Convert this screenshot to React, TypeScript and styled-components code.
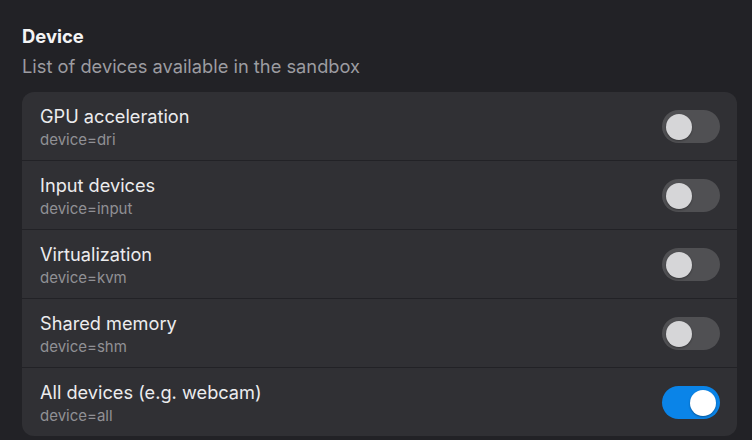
import React, { useState } from "react";
import styled, { createGlobalStyle } from "styled-components";

const Global = createGlobalStyle`
  html, body { margin: 0; padding: 0; background: #222226; }
  body { font-family: Inter, "Noto Sans", sans-serif; -webkit-font-smoothing: antialiased; }
`;

const Page = styled.div`
  width: 752px;
  height: 440px;
  box-sizing: border-box;
  padding: 25px 15px 0 22px;
  background: #222226;
  overflow: hidden;
`;

const Title = styled.h2`
  margin: 0;
  font-size: 18.4px;
  font-weight: 700;
  line-height: 23px;
  color: #f4f4f5;
`;

const Subtitle = styled.p`
  margin: 7px 0 0;
  font-size: 18.3px;
  line-height: 23px;
  color: #9c9ca1;
`;

const Card = styled.div`
  margin-top: 14px;
  background: #303034;
  border-radius: 12px;
  overflow: hidden;
  display: flex;
  flex-direction: column;
`;

const Row = styled.div`
  height: 68px;
  display: flex;
  align-items: center;
  justify-content: space-between;
  padding: 0 17px 0 18px;
  & + & { border-top: 1px solid #222226; }
`;

const Texts = styled.div`
  display: flex;
  flex-direction: column;
  gap: 3px;
  padding-top: 2px;
`;

const RowTitle = styled.div`
  font-size: 18.2px;
  line-height: 22px;
  color: #ececee;
`;

const RowSub = styled.div`
  font-size: 15px;
  line-height: 19px;
  color: #909095;
`;

const Track = styled.button<{ $on: boolean }>`
  position: relative;
  width: 58px;
  height: 33px;
  padding: 0;
  border: none;
  border-radius: 17px;
  background: ${(p) => (p.$on ? "#0a84e8" : "#505053")};
  cursor: pointer;
`;

const Knob = styled.span<{ $on: boolean }>`
  position: absolute;
  top: 4px;
  left: ${(p) => (p.$on ? "28px" : "4px")};
  width: 26px;
  height: 26px;
  border-radius: 50%;
  background: ${(p) => (p.$on ? "#ffffff" : "#d6d6d8")};
  box-shadow: 0 1px 2px rgba(0, 0, 0, 0.35);
`;

const items = [
  { title: "GPU acceleration", sub: "device=dri", on: false },
  { title: "Input devices", sub: "device=input", on: false },
  { title: "Virtualization", sub: "device=kvm", on: false },
  { title: "Shared memory", sub: "device=shm", on: false },
  { title: "All devices (e.g. webcam)", sub: "device=all", on: true },
];

export default function App() {
  const [state, setState] = useState(items.map((i) => i.on));
  return (
    <>
      <Global />
      <Page>
        <Title>Device</Title>
        <Subtitle>List of devices available in the sandbox</Subtitle>
        <Card>
          {items.map((it, i) => (
            <Row key={it.sub}>
              <Texts>
                <RowTitle>{it.title}</RowTitle>
                <RowSub>{it.sub}</RowSub>
              </Texts>
              <Track
                $on={state[i]}
                onClick={() => setState((s) => s.map((v, j) => (j === i ? !v : v)))}
              >
                <Knob $on={state[i]} />
              </Track>
            </Row>
          ))}
        </Card>
      </Page>
    </>
  );
}
